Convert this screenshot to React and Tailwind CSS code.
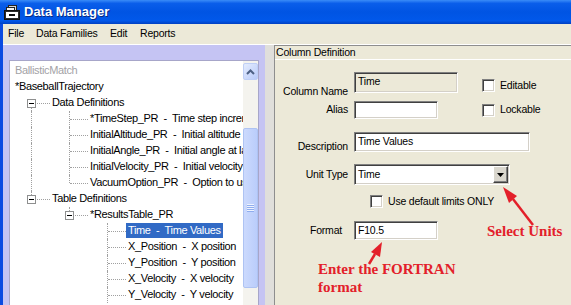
import React from 'react'

const ui = "font-['Liberation_Sans',Arial,sans-serif] text-[10.5px] tracking-[-0.2px] text-black"
const sunken =
  'border border-t-[#808080] border-l-[#808080] border-b-white border-r-white shadow-[inset_1px_1px_0_#404040,inset_-1px_-1px_0_#D4D0C8]'
const dots = 'border-dotted border-[#A0A0A0]'

const tree = [
  { label: 'BallisticMatch', cells: [], root: true, muted: true },
  { label: '*BaseballTrajectory', cells: [], root: true },
  { label: 'Data Definitions', cells: [['down', true]] },
  { label: '*TimeStep_PR  -  Time step increment', cells: [['pipe'], ['tee']] },
  { label: 'InitialAltitude_PR  -  Initial altitude', cells: [['pipe'], ['tee']] },
  { label: 'InitialAngle_PR  -  Initial angle at launch', cells: [['pipe'], ['tee']] },
  { label: 'InitialVelocity_PR  -  Initial velocity', cells: [['pipe'], ['tee']] },
  { label: 'VacuumOption_PR  -  Option to use vacuum', cells: [['pipe'], ['elbow']] },
  { label: 'Table Definitions', cells: [['elbow', true]] },
  { label: '*ResultsTable_PR', cells: [['blank'], ['elbow', true]] },
  { label: 'Time  -  Time Values', cells: [['blank'], ['blank'], ['tee']], selected: true },
  { label: 'X_Position  -  X position', cells: [['blank'], ['blank'], ['tee']] },
  { label: 'Y_Position  -  Y position', cells: [['blank'], ['blank'], ['tee']] },
  { label: 'X_Velocity  -  X velocity', cells: [['blank'], ['blank'], ['tee']] },
  { label: 'Y_Velocity  -  Y velocity', cells: [['blank'], ['blank'], ['tee']] },
]

function Cell({ kind, open }) {
  return (
    <div className="relative w-[38px] h-[16px] shrink-0">
      {(kind === 'pipe' || kind === 'tee') && (
        <div className={`absolute left-[19px] top-0 bottom-0 border-l ${dots}`} />
      )}
      {kind === 'elbow' && <div className={`absolute left-[19px] top-0 h-[8px] border-l ${dots}`} />}
      {kind === 'down' && <div className={`absolute left-[19px] top-[8px] bottom-0 border-l ${dots}`} />}
      {kind !== 'pipe' && kind !== 'blank' && (
        <div className={`absolute left-[20px] right-0 top-[8px] border-t ${dots}`} />
      )}
      {open && (
        <div className="absolute left-[15px] top-[4px] w-[9px] h-[9px] border border-[#8E8F8F] bg-white flex items-center justify-center">
          <div className="w-[5px] h-px bg-black" />
        </div>
      )}
    </div>
  )
}

function TreeRow({ row }) {
  return (
    <div className="flex h-[16px] whitespace-pre text-[11px] tracking-[-0.35px]">
      {row.cells.map(([kind, open], i) => (
        <Cell key={i} kind={kind} open={open} />
      ))}
      <span
        className={`leading-[15px] h-[15px] px-[2px] ${row.root ? 'ml-[1px]' : ''} ${
          row.selected ? 'bg-[#316AC5] text-white' : row.muted ? 'text-[#A3A2A6]' : ''
        }`}
      >
        {row.label}
      </span>
    </div>
  )
}

function Scrollbar() {
  return (
    <div className="w-[15px] shrink-0 bg-[#F4F3EE] flex flex-col">
      <div className="mt-[2px] h-[17px] rounded-[2px] border border-[#BFCFF6] bg-[linear-gradient(135deg,#E4ECFE,#B9CBF9)] flex items-center justify-center">
        <svg width="9" height="6" viewBox="0 0 9 6">
          <path d="M1 5 L4.5 1.5 L8 5" fill="none" stroke="#4D6185" strokeWidth="2" />
        </svg>
      </div>
      <div className="h-[48px]" />
      <div className="h-[160px] rounded-[2px] border border-[#AEC3F3] bg-[linear-gradient(90deg,#CCDAFD,#BACDFB)] flex items-center justify-center">
        <div className="flex flex-col">
          {[0, 1, 2, 3].map((i) => (
            <div key={i} className="w-[7px] h-[2px] border-t border-[#EEF3FE] border-b-0 bg-[#8FADEE]" />
          ))}
        </div>
      </div>
    </div>
  )
}

function CheckBox() {
  return <div className={`w-[13px] h-[13px] shrink-0 bg-white ${sunken}`} />
}

function TitleIcon() {
  return (
    <svg width="16" height="16" viewBox="0 0 16 16">
      <rect x="4.5" y="1.5" width="8" height="6" fill="#D8D8D8" stroke="#222" />
      <rect x="2.5" y="3.5" width="8" height="5" fill="#F2F2F2" stroke="#222" />
      <rect x="0.5" y="6.5" width="15" height="9" fill="#2B2B2B" stroke="#111" />
      <rect x="2" y="8" width="12" height="6" fill="#FFFFFF" />
      <rect x="5" y="10" width="6" height="2" fill="#111" />
    </svg>
  )
}

export default function App() {
  return (
    <div className={`relative w-[571px] h-[305px] overflow-hidden bg-[#ECE9D8] flex flex-col ${ui}`}>
      {/* title bar */}
      <div className="h-[24px] shrink-0 flex items-center pl-[4px] gap-[4px] bg-[linear-gradient(180deg,#3A8CF8_0%,#0A5EEA_14%,#0054E3_50%,#0158EA_86%,#0040C2_100%)]">
        <TitleIcon />
        <span className="font-['Liberation_Sans',Arial,sans-serif] font-bold text-[13px] tracking-normal text-white [text-shadow:1px_1px_0_#0A2A80]">
          Data Manager
        </span>
      </div>

      <div className="flex flex-1">
        <div className="w-[3px] shrink-0 bg-[#0B4BE1]" />
        <div className="flex-1 flex flex-col">
          {/* menu */}
          <div className="h-[20px] shrink-0 flex items-center pl-[5px]">
            <span className="w-[28px]">File</span>
            <span className="w-[74px]">Data Families</span>
            <span className="w-[30px]">Edit</span>
            <span>Reports</span>
          </div>

          <div className="flex flex-1 border-t border-white overflow-hidden">
            {/* tree frame */}
            <div className="w-[262px] shrink-0 bg-[#C5C4F3] pt-[15px] pl-[6px] overflow-hidden">
              <div className="w-[250px] h-[300px] bg-white border border-[#A7A6C9] flex">
                <div className="flex-1 overflow-hidden pt-[2px] pl-[2px]">
                  {tree.map((row, i) => (
                    <TreeRow key={i} row={row} />
                  ))}
                </div>
                <Scrollbar />
              </div>
            </div>
            <div className="w-[9px] shrink-0 bg-[#E0DFDB]" />

            {/* column definition */}
            <div className="flex-1 flex flex-col border-l border-[#8E8E8E]">
              <div className="h-[15px] shrink-0 border-t border-[#8E8E8E] border-b border-b-white pl-[1px] leading-[13px]">
                Column Definition
              </div>

              <div className="flex flex-col">
                <div className="mt-[12px] h-[21px] flex items-start">
                  <span className="w-[73px] text-right mt-[13px] leading-[13px]">Column Name</span>
                  <div className={`ml-[6px] w-[104px] h-[21px] bg-[#ECE9D8] pl-[3px] pt-[1px] leading-[14px] ${sunken}`}>
                    Time
                  </div>
                  <div className="ml-[24px] mt-[6px] flex items-center">
                    <CheckBox />
                    <span className="ml-[5px]">Editable</span>
                  </div>
                </div>

                <div className="mt-[8px] h-[18px] flex items-center">
                  <span className="w-[73px] text-right">Alias</span>
                  <div className={`ml-[6px] w-[84px] h-[18px] bg-white ${sunken}`} />
                  <div className="ml-[44px] flex items-center">
                    <CheckBox />
                    <span className="ml-[5px]">Lockable</span>
                  </div>
                </div>

                <div className="mt-[13px] h-[20px] flex items-start">
                  <span className="w-[73px] text-right pt-[8px] leading-[13px]">Description</span>
                  <div className={`ml-[6px] w-[176px] h-[20px] bg-white pl-[3px] flex items-center ${sunken}`}>
                    Time Values
                  </div>
                </div>

                <div className="mt-[12px] h-[21px] flex items-center">
                  <span className="w-[73px] text-right">Unit Type</span>
                  <div className={`ml-[6px] w-[156px] h-[21px] bg-white flex items-center ${sunken}`}>
                    <span className="flex-1 pl-[3px]">Time</span>
                    <div className="w-[15px] h-[17px] mr-px bg-[#DAD7CE] border border-t-white border-l-white border-b-[#404040] border-r-[#404040] shadow-[inset_-1px_-1px_0_#808080] flex items-center justify-center">
                      <svg width="7" height="4" viewBox="0 0 7 4">
                        <path d="M0 0h7L3.5 4z" fill="#000" />
                      </svg>
                    </div>
                  </div>
                </div>

                <div className="mt-[10px] h-[13px] pl-[95px] flex items-center">
                  <CheckBox />
                  <span className="ml-[5px]">Use default limits ONLY</span>
                </div>

                <div className="mt-[13px] h-[19px] flex items-center">
                  <span className="w-[67px] text-right">Format</span>
                  <div className={`ml-[12px] w-[84px] h-[19px] bg-white pl-[3px] flex items-center ${sunken}`}>
                    F10.5
                  </div>
                  <span className="ml-[49px] font-['Liberation_Serif',serif] font-bold text-[15px] tracking-normal leading-[18px] text-[#E3202A]">
                    Select Units
                  </span>
                </div>

                <div className="mt-[20px] pl-[43px] font-['Liberation_Serif',serif] font-bold text-[15px] tracking-normal leading-[18px] text-[#E3202A]">
                  Enter the FORTRAN
                  <br />
                  format
                </div>
              </div>
            </div>
          </div>
        </div>
      </div>

      {/* annotation arrows */}
      <svg className="absolute inset-0 pointer-events-none" width="571" height="305" viewBox="0 0 571 305">
        <line x1="533" y1="225" x2="513" y2="199" stroke="#E3202A" strokeWidth="2.5" />
        <polygon points="503,187 517,196 509,203" fill="#E3202A" />
        <line x1="369" y1="264" x2="375" y2="254" stroke="#E3202A" strokeWidth="2.5" />
        <polygon points="382,242 380,257 371,252" fill="#E3202A" />
      </svg>
    </div>
  )
}
